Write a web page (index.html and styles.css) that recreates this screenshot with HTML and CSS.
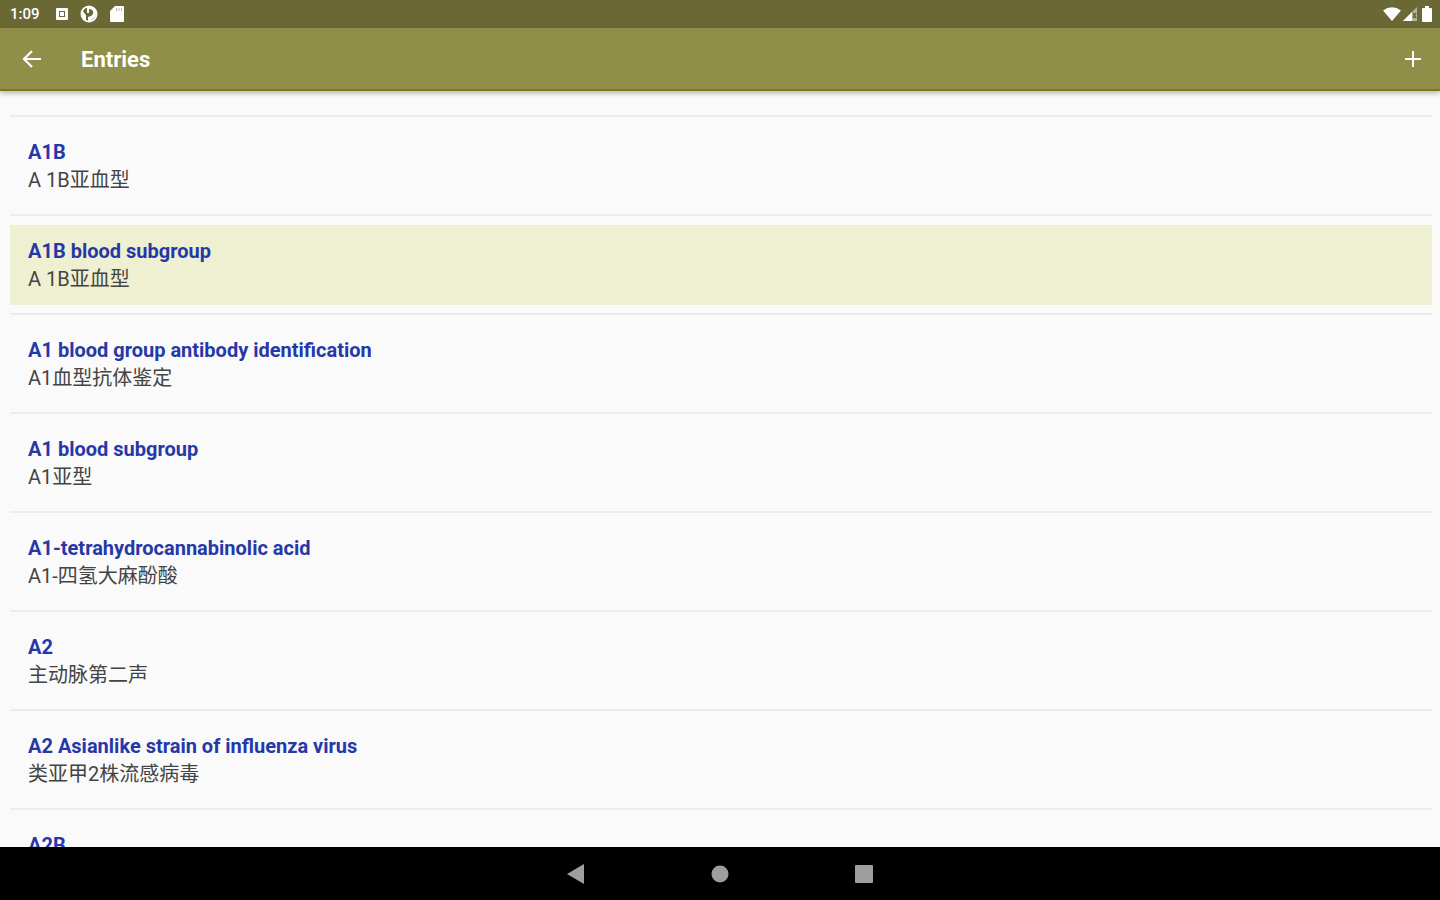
FILE: index.html
```html
<!DOCTYPE html>
<html lang="en">
<head>
    <meta charset="UTF-8">
    <meta name="viewport" content="width=device-width, initial-scale=1.0">
    <title>Entries</title>
    <link rel="stylesheet" href="styles.css">
</head>
<body>
    <div class="status-bar">
        <span class="clock">1:09</span>
        <div class="notifications">
            <svg width="12" height="14" viewBox="0 0 12 14">
                <path fill="#fff" fill-rule="evenodd" d="M1 1h10q1 0 1 1v10q0 1-1 1H1q-1 0-1-1V2q0-1 1-1zM3 4v6h6V4z"/>
                <path fill="#fff" d="M4 5h4v4H4z"/>
            </svg>
            <svg width="18" height="18" viewBox="0 0 18 18">
                <circle cx="9" cy="9" r="7.6" fill="none" stroke="#fff" stroke-width="1.8"/>
                <path fill="#fff" d="M7 2Q13 0 16 6q1 5-3 8l-5 3v-5l3-1q3-2 2-5-1-2-4-2v4H7z"/>
                <path fill="#fff" d="M2 5l4 5v6Q0 13 2 5z"/>
            </svg>
            <svg width="14" height="16" viewBox="0 0 14 16">
                <path fill="#fff" d="M5 0h8q1 0 1 1v14q0 1-1 1H1q-1 0-1-1V5z"/>
                <path stroke="#6a6936" stroke-opacity=".5" d="M6.500 2v3M9 2v3M11.500 2v3"/>
            </svg>
        </div>
        <div class="system-icons">
            <svg width="18" height="14" viewBox="0 0 18 14">
                <path fill="#fff" d="M0 3.500Q9-3 18 3.500L9 14z"/>
            </svg>
            <svg width="14" height="14" viewBox="0 0 14 14">
                <path fill="#fff" fill-opacity=".5" d="M14 0v14H0z"/>
                <path fill="#fff" d="M9 5v9H0z"/>
                <path stroke="#6a6936" stroke-width="1.500" d="M10 6l3 5M13 6l-3 5"/>
            </svg>
            <svg width="10" height="16" viewBox="0 0 10 16">
                <path fill="#fff" d="M3 0h4v2h2q1 0 1 1v12q0 1-1 1H1q-1 0-1-1V3q0-1 1-1h2z"/>
            </svg>
        </div>
    </div>

    <header class="app-bar">
        <button class="icon-button" aria-label="Back">
            <svg width="20" height="20" viewBox="0 0 20 20">
                <path fill="none" stroke="#fff" stroke-width="2.200" d="M19 10H2.500M10 2l-8 8 8 8"/>
            </svg>
        </button>
        <h1>Entries</h1>
        <button class="icon-button" aria-label="Add entry">
            <svg width="16" height="16" viewBox="0 0 16 16">
                <path stroke="#fff" stroke-width="2" d="M8 0v16M0 8h16"/>
            </svg>
        </button>
    </header>

    <main>
        <ul class="entries">
            <li>
                <a href="#" class="entry">
                    <span class="term">A1B</span>
                    <span class="translation" lang="zh">A 1B亚血型</span>
                </a>
            </li>
            <li>
                <a href="#" class="entry selected">
                    <span class="term">A1B blood subgroup</span>
                    <span class="translation" lang="zh">A 1B亚血型</span>
                </a>
            </li>
            <li>
                <a href="#" class="entry">
                    <span class="term">A1 blood group antibody identification</span>
                    <span class="translation" lang="zh">A1血型抗体鉴定</span>
                </a>
            </li>
            <li>
                <a href="#" class="entry">
                    <span class="term">A1 blood subgroup</span>
                    <span class="translation" lang="zh">A1亚型</span>
                </a>
            </li>
            <li>
                <a href="#" class="entry">
                    <span class="term">A1-tetrahydrocannabinolic acid</span>
                    <span class="translation" lang="zh">A1-四氢大麻酚酸</span>
                </a>
            </li>
            <li>
                <a href="#" class="entry">
                    <span class="term">A2</span>
                    <span class="translation" lang="zh">主动脉第二声</span>
                </a>
            </li>
            <li>
                <a href="#" class="entry">
                    <span class="term">A2 Asianlike strain of influenza virus</span>
                    <span class="translation" lang="zh">类亚甲2株流感病毒</span>
                </a>
            </li>
            <li>
                <a href="#" class="entry">
                    <span class="term">A2B</span>
                </a>
            </li>
        </ul>
    </main>

    <nav class="nav-bar">
        <button aria-label="Back">
            <svg width="18" height="20" viewBox="0 0 18 20"><path fill="#9e9e9e" d="M17 0v20L0 10z"/></svg>
        </button>
        <button aria-label="Home">
            <svg width="18" height="18" viewBox="0 0 18 18"><circle cx="9" cy="9" r="8.500" fill="#9e9e9e"/></svg>
        </button>
        <button aria-label="Recent apps">
            <svg width="18" height="20" viewBox="0 0 18 20"><rect y="1" width="18" height="18" rx="1" fill="#9e9e9e"/></svg>
        </button>
    </nav>
</body>
</html>
```
FILE: styles.css
```css
* {
    box-sizing: border-box;
}

body {
    display: flex;
    flex-direction: column;
    height: 100vh;
    margin: 0;
    background-color: #fafafa;
    font-family: Roboto, "Noto Sans CJK SC", sans-serif;
}

button {
    display: flex;
    justify-content: center;
    align-items: center;
    border: none;
    padding: 0;
    background: none;
    cursor: pointer;
}

svg {
    display: block;
}

/* Status bar */
.status-bar {
    display: flex;
    flex: none;
    align-items: center;
    height: 28px;
    padding: 0 8px 0 10px;
    background-color: #6a6936;
    color: #fff;
}

.clock {
    font-size: 15px;
    font-weight: 500;
}

.notifications,
.system-icons {
    display: flex;
    align-items: center;
}

.notifications {
    gap: 12px;
    margin-left: 16px;
}

.system-icons {
    gap: 5px;
    margin-left: auto;
}

.system-icons svg:first-child {
    margin-right: -3px;
}

/* App bar */
.app-bar {
    display: flex;
    flex: none;
    align-items: center;
    height: 63px;
    padding: 0 10px 0 16px;
    border-bottom: 2px solid #7d7b0c;
    background-color: #8f8f49;
    box-shadow: 0 2px 5px rgba(0, 0, 0, 0.3);
    z-index: 1;
}

.app-bar h1 {
    flex: 1;
    margin: 0 0 0 33px;
    padding-top: 2px;
    color: #fff;
    font-size: 22px;
    font-weight: 700;
}

.icon-button {
    width: 32px;
    height: 32px;
}

.app-bar h1 + .icon-button {
    width: 34px;
}

/* Entry list */
main {
    flex: 1;
    min-height: 0;
    overflow: hidden;
    padding: 24px 8px 0 10px;
}

.entries {
    margin: 0;
    padding: 0;
    list-style: none;
}

.entries li {
    padding: 9px 0 8px;
    border-top: 2px solid #ececec;
}

.entry {
    display: block;
    padding: 12px 18px;
    font-size: 20px;
    line-height: 28px;
    text-decoration: none;
}

.entry.selected {
    background-color: #eef0d1;
}

.term,
.translation {
    display: block;
}

.term {
    color: #2638a8;
    font-weight: 700;
}

.translation {
    color: #444;
}

/* Navigation bar */
.nav-bar {
    display: flex;
    flex: none;
    justify-content: center;
    gap: 96px;
    height: 53px;
    background-color: #000;
}

.nav-bar button {
    width: 48px;
}
```
